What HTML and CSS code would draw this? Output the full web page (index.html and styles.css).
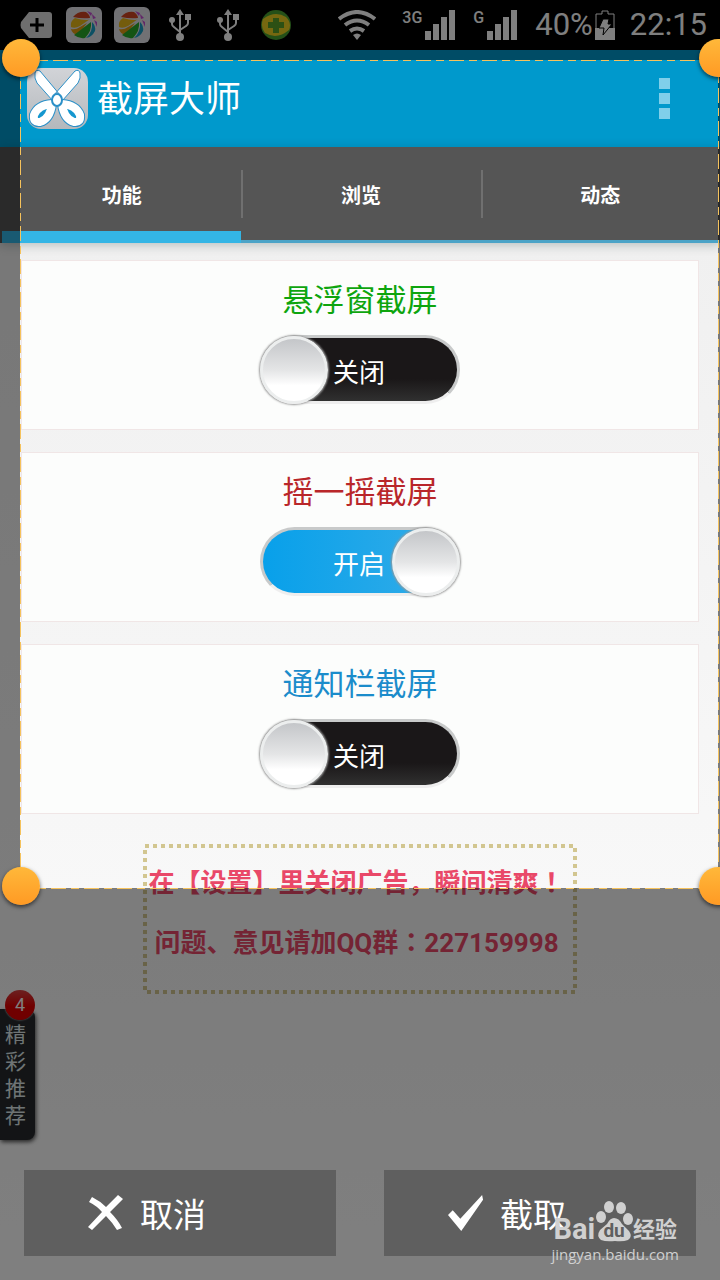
FILE: index.html
```html
<!DOCTYPE html>
<html lang="zh-CN">
<head>
  <meta charset="UTF-8">
  <meta name="viewport" content="width=device-width, initial-scale=1.0">
  <title>截屏大师</title>
  <link rel="stylesheet" href="styles.css">
</head>
<body>
  <!-- shared icons -->
  <svg class="defs" width="0" height="0">
    <symbol id="usb" viewBox="0 0 22 32">
      <g fill="none" stroke="#fff" stroke-width="2">
        <path d="M11 4v24M3 12v3q0 2 2 3l6 5M19 10v4q0 2-2 3l-6 4"/>
      </g>
      <path d="M11 0l4 6H7zM16 5h6v6h-6z" fill="#fff"/>
      <circle cx="3" cy="11" r="3" fill="#fff"/>
      <circle cx="11" cy="28" r="4" fill="#fff"/>
    </symbol>
    <symbol id="ball" viewBox="0 0 36 36">
      <rect width="36" height="36" rx="6" fill="#e2e2e8"/>
      <path d="M5 20Q4 14 9 11q6 2 12 2 2 0 3-1L14 19Q9 22 5 20z" fill="#e8b818"/>
      <path d="M7 10q5-6 13-5 4 3 4 6-8 1-17-1z" fill="#cf4420"/>
      <path d="M5 22q5 1 9-2l7-4-9 12q-6-1-7-6z" fill="#e09a10"/>
      <path d="M8 28l17-13q1 9-6 16-6 1-11-3z" fill="#28a828"/>
      <path d="M20 31q7-6 6-16 4 4 3 9-3 6-9 7z" fill="#18a0c8"/>
      <path d="M21 4l5 2-1 3zM26 7l4 4-3 1zM28 13l3 2v5z" fill="#c44cd0"/>
    </symbol>
    <symbol id="signal" viewBox="0 0 30 30">
      <path d="M0 21h6v9H0zM8 14h6v16H8zM16 7h6v23h-6zM24 0h6v30h-6z" fill="#fff"/>
    </symbol>
  </svg>

  <div class="screen">
    <div class="status-bar">
      <div class="notifications">
        <span><svg width="32" height="28" viewBox="0 0 32 28"><path d="M9 1h20q3 0 3 3v20q0 3-3 3H9L1 17q-1-3 0-6z" fill="#ddd"/><path d="M17 7v14M10 14h14" stroke="#000" stroke-width="3"/></svg></span>
        <span><svg width="36" height="36"><use href="#ball"/></svg></span>
        <span><svg width="36" height="36"><use href="#ball"/></svg></span>
        <span><svg width="22" height="32"><use href="#usb"/></svg></span>
        <span><svg width="22" height="32"><use href="#usb"/></svg></span>
        <span><svg width="30" height="30" viewBox="0 0 30 30"><circle cx="15" cy="15" r="15" fill="#48a030"/><path d="M2 9Q14 0 25 7q6 6 3 13-12 10-24 3-5-6-2-14z" fill="#ecd020"/><path d="M12 8h6v4h5v6h-5v5h-6v-5H7v-6h5z" fill="#58a028"/></svg></span>
      </div>
      <div class="system">
        <svg class="wifi" width="38" height="30" viewBox="0 0 38 30"><g fill="none" stroke="#fff" stroke-width="4"><path d="M1 9q18-14 36 0M7 15q12-9 24 0M12 21q7-5 14 0"/></g><path d="M15 25q4-3 8 0l-4 5z" fill="#fff"/></svg>
        <span class="network">3G</span>
        <svg class="bars" width="30" height="30"><use href="#signal"/></svg>
        <span class="network">G</span>
        <svg class="bars" width="30" height="30"><use href="#signal"/></svg>
        <span>40%</span>
        <svg class="battery" width="20" height="30" viewBox="0 0 20 30"><path d="M1 4h6V1h6v3h6v25H1z" fill="none" stroke="#fff"/><path d="M0 18h20v12H0z" fill="#fff"/><path d="M8 9h6l-1 5h4L8 25l1-7H4z" fill="#fff" stroke="#000"/></svg>
        <span>22:15</span>
      </div>
    </div>

    <header class="action-bar">
      <svg class="logo" width="62" height="62" viewBox="0 0 62 62">
        <defs><linearGradient id="tile" x2="0" y2="1"><stop stop-color="#d2d4d8"/><stop offset="1" stop-color="#b4b8bc"/></linearGradient></defs>
        <rect width="61" height="61" rx="14" fill="url(#tile)"/>
        <path d="M8 5q1-4 5-2l20 24-7 6L10 15Q7 10 8 5zM53 5q-1-4-5-2L27 27l8 6 16-18q3-5 2-10z" fill="#fff" stroke="#2b90c8" stroke-width="1"/>
        <g stroke="#2b90c8" stroke-width="10" fill="#2b90c8">
          <path d="M25 36Q11 37 7 47q-1 8 6 7 10-3 12-18z"/>
          <path d="M35 36q14 1 18 11 1 8-6 7-10-3-12-18z"/>
        </g>
        <g stroke="#fff" stroke-width="8" fill="#1597cf">
          <path d="M25 36Q11 37 7 47q-1 8 6 7 10-3 12-18z"/>
          <path d="M35 36q14 1 18 11 1 8-6 7-10-3-12-18z"/>
        </g>
        <ellipse cx="30" cy="32" rx="5" ry="6" fill="#fff" stroke="#2b90c8" stroke-width="2"/>
      </svg>
      <h1>截屏大师</h1>
      <button class="menu" aria-label="菜单"><i></i><i></i><i></i></button>
    </header>

    <nav class="tabs">
      <a href="#" class="active">功能</a>
      <a href="#">浏览</a>
      <a href="#">动态</a>
    </nav>

    <main>
      <section class="card">
        <h2 class="green" id="float">悬浮窗截屏</h2>
        <label class="switch">
          <input type="checkbox" aria-labelledby="float">
          <span>关闭</span>
        </label>
      </section>
      <section class="card">
        <h2 class="red" id="shake">摇一摇截屏</h2>
        <label class="switch">
          <input type="checkbox" aria-labelledby="shake" checked>
          <span>开启</span>
        </label>
      </section>
      <section class="card">
        <h2 class="blue" id="notice">通知栏截屏</h2>
        <label class="switch">
          <input type="checkbox" aria-labelledby="notice">
          <span>关闭</span>
        </label>
      </section>

      <div class="tip">
        <svg class="tip-border"><rect x="2" y="2"/></svg>
        <p>在【设置】里关闭广告，瞬间清爽<span class="mark" lang="zh-TW">！</span></p>
        <p>问题、意见请加QQ群<span class="mark" lang="zh-TW">：</span>227159998</p>
      </div>
    </main>

    <!-- side drawer handle -->
    <a href="#" class="recommend">
      <span class="badge">4</span>
      精彩推荐
    </a>

    <!-- crop area, everything around it is dimmed -->
    <div class="crop">
      <svg class="crop-line"><rect width="100%" height="100%"/></svg>
      <span class="handle top left"></span>
      <span class="handle top right"></span>
      <span class="handle bottom left"></span>
      <span class="handle bottom right"></span>
    </div>

    <div class="actions">
      <button>
        <svg width="36" height="36" viewBox="0 0 36 36"><path d="M1 7l3-5q8 4 14 10L30 0l5 4-13 13q8 8 12 16l-5 2q-5-8-11-14L4 35l-4-3 14-15Q9 11 1 7z" fill="#fff"/></svg>
        取消
      </button>
      <button>
        <svg width="36" height="38" viewBox="0 0 38 38"><path d="M0 21l5-5 8 9L36 0l1 5-23 33z" fill="#fff"/></svg>
        截取
      </button>
    </div>

    <div class="watermark">
      <div class="brand">
        <b>Bai</b>
        <span class="paw">
          <svg width="38" height="42" viewBox="0 0 38 42"><g fill="#d0d0d0"><ellipse cx="6" cy="16" rx="5" ry="6"/><ellipse cx="14" cy="6" rx="5" ry="6"/><ellipse cx="26" cy="7" rx="5" ry="6"/><ellipse cx="33" cy="18" rx="5" ry="6"/><path d="M19 17q5 0 8 6l7 7q4 6-1 9-5 2-13 1-9 1-14-1-5-4-1-10l7-6q3-6 7-6z"/></g></svg>
          <em>du</em>
        </span>
        <strong>经验</strong>
      </div>
      <div class="site">jingyan.baidu.com</div>
    </div>
  </div>
</body>
</html>
```
FILE: styles.css
```css
*, *::before {
  box-sizing: border-box;
}

body {
  margin: 0;
  font-family: Roboto, "Noto Sans CJK SC", sans-serif;
}

h1, h2, p {
  margin: 0;
  font-weight: normal;
}

button {
  border: none;
  padding: 0;
  font-family: inherit;
  cursor: pointer;
}

a {
  text-decoration: none;
}

svg {
  display: block;
  flex: none;
}

.defs {
  position: absolute;
}

.screen {
  position: relative;
  display: flex;
  flex-direction: column;
  min-height: 100vh;
  overflow: hidden;
  background: linear-gradient(#ededed, #f8f8f8 70%, #ffffff);
}

/* status bar */
.status-bar {
  display: flex;
  justify-content: space-between;
  height: 50px;
  padding: 0 13px 0 12px;
  background: #000;
  color: #fff;
}

.notifications, .system {
  display: flex;
  align-items: center;
}

.notifications span {
  display: flex;
  justify-content: center;
  width: 48px;
}

.system {
  font-size: 31px;
  line-height: 52px;
}

.wifi {
  margin-right: 26px;
}

.network {
  align-self: flex-start;
  margin-right: 3px;
  font-size: 16px;
  font-weight: 500;
  line-height: 36px;
}

.bars {
  margin-right: 18px;
}

.battery {
  margin: 0 15px 0 2px;
}

/* title */
.action-bar {
  display: flex;
  align-items: center;
  height: 97px;
  padding: 0 50px 0 27px;
  background: #0099cc;
  color: #fff;
}

.action-bar h1 {
  flex: 1;
  margin-left: 8px;
  padding-top: 2px;
  font-size: 36px;
  line-height: 48px;
}

.menu {
  display: flex;
  flex-direction: column;
  gap: 4px;
  padding: 0;
  background: none;
}

.menu i {
  width: 11px;
  height: 11px;
  background: #80cfea;
}

/* tabs */
.tabs {
  display: flex;
  height: 96px;
  padding-left: 2px;
  background: #555;
  box-shadow: 0 2px 10px rgba(0, 40, 40, 0.25);
}

.tabs a {
  position: relative;
  flex: 1;
  border-bottom: 3px solid #4ba3c7;
  color: #fff;
  font-size: 20px;
  font-weight: bold;
  line-height: 98px;
  text-align: center;
}

.tabs a.active {
  border-bottom: 12px solid #33b5e5;
}

.tabs a + a::before {
  content: "";
  position: absolute;
  left: 0;
  top: 23px;
  width: 2px;
  height: 48px;
  background: #707070;
}

/* cards */
main {
  display: flex;
  flex-direction: column;
  gap: 22px;
  padding: 17px 21px 0;
}

.card {
  display: flex;
  flex-direction: column;
  align-items: center;
  height: 170px;
  padding-top: 18px;
  border: 1px solid #f0e6e6;
  background: #fcfdfc;
}

.card h2 {
  margin-bottom: 11px;
  font-size: 31px;
  line-height: 44px;
}

.green {
  color: #0ea50e;
}

.red {
  color: #b9262a;
}

.blue {
  color: #1b8ccb;
}

.switch {
  position: relative;
  display: flex;
  align-items: center;
  justify-content: center;
  width: 202px;
  height: 72px;
  cursor: pointer;
}

.switch input {
  appearance: none;
  position: absolute;
  inset: 1px 1px 2px;
  margin: 0;
  border: 3px solid #c8caca;
  border-bottom-color: #eee;
  border-radius: 35px;
  background: linear-gradient(#1a1718 65%, #303030);
  cursor: pointer;
}

.switch input::before {
  content: "";
  position: absolute;
  top: -2px;
  left: -3px;
  width: 68px;
  height: 68px;
  border: 3px solid #eceeee;
  border-radius: 50%;
  background: linear-gradient(#c4c6c9, #e4e5e6 50%, #fff 75%);
  box-shadow: 0 0 2px 1px #999;
}

.switch input:checked {
  background: linear-gradient(90deg, #08a0ea, #35ade8);
}

.switch input:checked::before {
  left: auto;
  right: -3px;
}

.switch span {
  position: relative;
  padding: 6px 2px 0 0;
  color: #fff;
  font-size: 26px;
  line-height: 36px;
  pointer-events: none;
}

/* tip */
.tip {
  position: relative;
  align-self: center;
  width: 434px;
  height: 150px;
  margin-top: 8px;
  padding: 9px 7px 0 0;
  color: #e94868;
  font-size: 26px;
  line-height: 60px;
  text-align: center;
  white-space: nowrap;
}

.tip p {
  font-weight: bold;
}

/* centred full-width punctuation */
.mark {
  font-family: "Noto Sans CJK TC", sans-serif;
  line-height: 1;
}

.tip-border {
  position: absolute;
  inset: 0;
  width: 100%;
  height: 100%;
}

.tip-border rect {
  width: calc(100% - 4px);
  height: calc(100% - 4px);
  fill: none;
  stroke: #d2c690;
  stroke-width: 4;
  stroke-dasharray: 4 4;
}

/* drawer handle */
.recommend {
  position: absolute;
  left: 0;
  bottom: 140px;
  width: 35px;
  height: 131px;
  padding: 13px 8px 0 5px;
  border-radius: 0 8px 8px 0;
  background: #26282c;
  box-shadow: 1px 2px 4px rgba(0, 0, 0, 0.7);
  color: #dfe8ea;
  font-size: 21px;
  line-height: 27px;
  word-break: break-all;
}

.badge {
  position: absolute;
  left: 5px;
  top: -19px;
  width: 30px;
  height: 30px;
  border-radius: 50%;
  background: linear-gradient(#d84040, #e00000 55%);
  box-shadow: 0 0 2px #fff;
  color: #fff;
  font-size: 18px;
  line-height: 30px;
  text-align: center;
}

/* crop area */
.crop {
  position: absolute;
  top: 60px;
  right: 2px;
  bottom: 392px;
  left: 20px;
  box-shadow: 0 0 0 2000px rgba(0, 0, 0, 0.5);
}

.crop-line {
  width: 100%;
  height: 100%;
  overflow: visible;
}

.crop-line rect {
  fill: none;
  stroke: #f5c25c;
  stroke-width: 1;
  stroke-dasharray: 15 5 8 5;
  shape-rendering: crispEdges;
}

.handle {
  position: absolute;
  width: 38px;
  height: 38px;
  border-radius: 50%;
  background: linear-gradient(#ffb83a, #ff9a24);
  box-shadow: 0 2px 4px rgba(0, 0, 0, 0.6);
}

.top {
  top: -21px;
}

.bottom {
  bottom: -17px;
}

.left {
  left: -18px;
}

.right {
  right: -19px;
}

/* buttons */
.actions {
  position: absolute;
  right: 24px;
  bottom: 24px;
  left: 24px;
  display: flex;
  gap: 48px;
}

.actions button {
  display: flex;
  flex: 1;
  align-items: center;
  gap: 16px;
  height: 86px;
  padding-left: 64px;
  background: #5f5f5f;
  color: #fff;
  font-size: 33px;
}

/* watermark */
.watermark {
  position: absolute;
  right: 41px;
  bottom: 15px;
  color: #d0d0d0;
}

.brand {
  display: flex;
  align-items: flex-end;
  height: 42px;
  padding-left: 2px;
}

.brand b {
  font-size: 29px;
  line-height: 28px;
}

.paw {
  position: relative;
}

.paw em {
  position: absolute;
  right: 0;
  bottom: 3px;
  left: 0;
  color: #5f5f5f;
  font-size: 19px;
  font-style: normal;
  font-weight: bold;
  line-height: 19px;
  text-align: center;
}

.brand strong {
  font-size: 22px;
  line-height: 26px;
}

.site {
  font-family: "Open Sans", sans-serif;
  font-size: 15px;
  line-height: 22px;
}
```
